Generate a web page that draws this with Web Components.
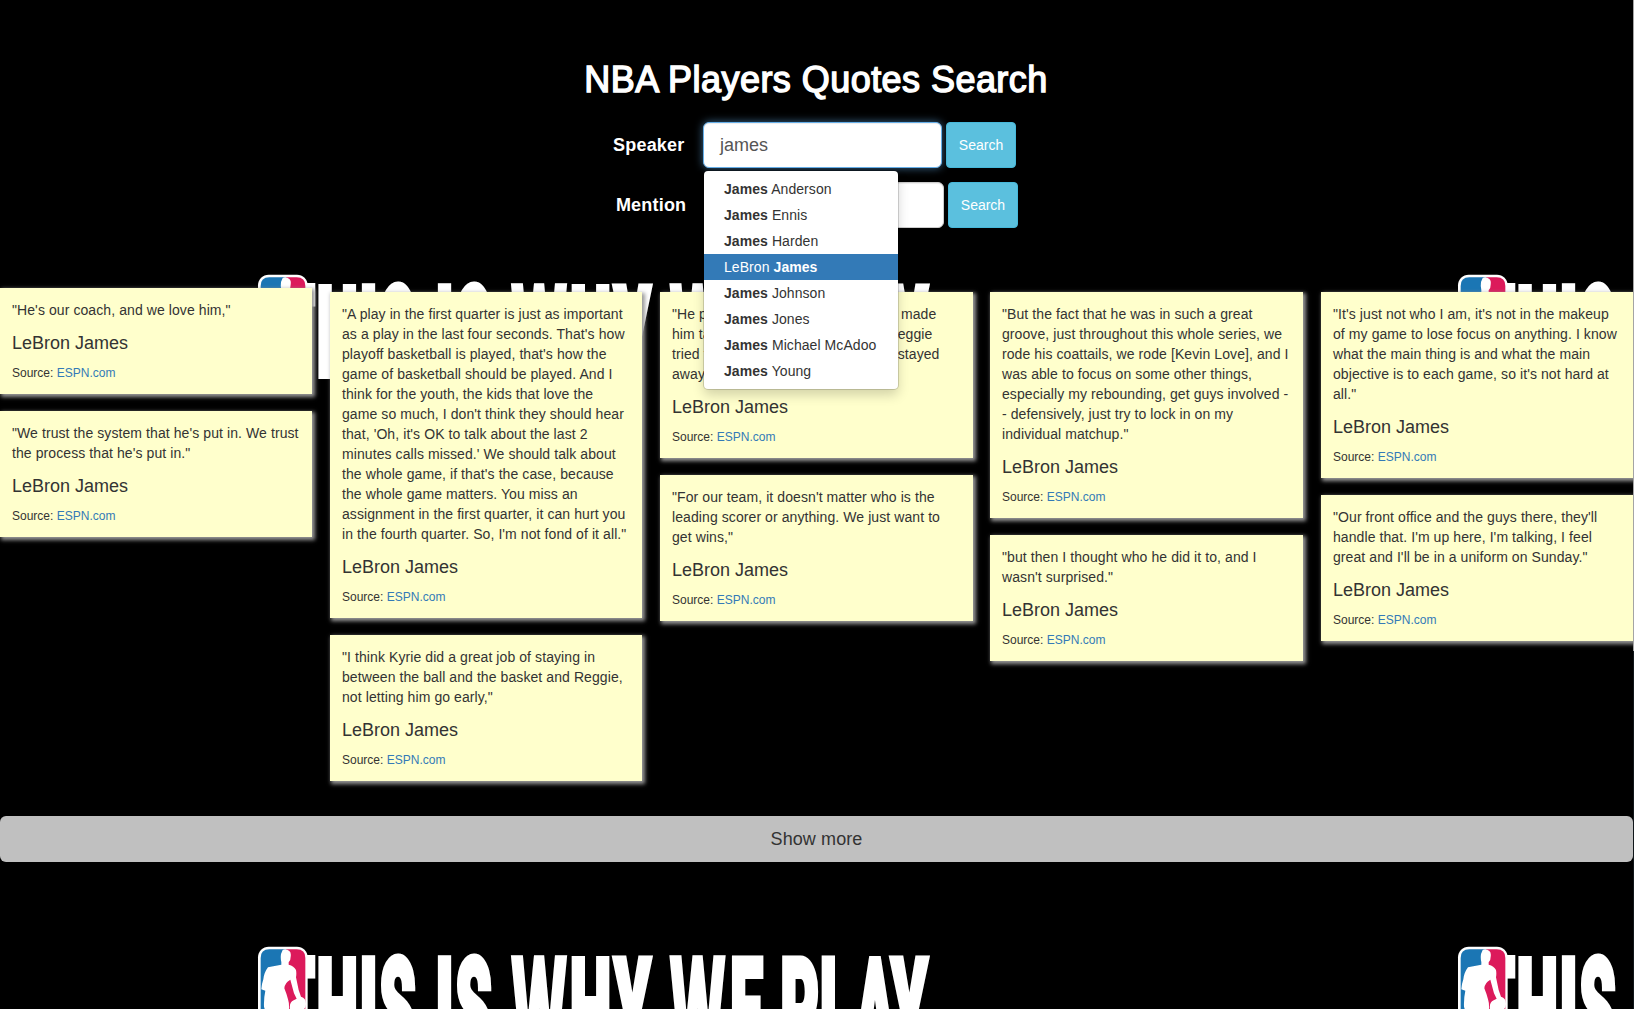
<!DOCTYPE html>
<html lang="en">
<head>
<meta charset="utf-8">
<title>NBA Players Quotes Search</title>
<style>
html,body{margin:0;height:100%;overflow:hidden;background:#000}
body{font:14px/20px "Liberation Sans",Arial,sans-serif;color:#333}
</style>
</head>
<body>
<quotes-app></quotes-app>
<script>
class Base extends HTMLElement{
  constructor(){super();this.attachShadow({mode:'open'})}
  connectedCallback(){this.shadowRoot.innerHTML=this.render()}
}

customElements.define('nba-banner',class extends Base{
  render(){return `<style>
    :host{display:block;width:1200px;height:672px}
    svg{display:block}
    text{font:700 140px Roboto,"Liberation Sans",sans-serif;font-stretch:75%;fill:#fff;stroke:#fff;stroke-width:5.6px;stroke-linejoin:miter;vector-effect:non-scaling-stroke;text-anchor:middle}
    .w{font-family:"Open Sans",sans-serif}
  </style>
  <svg width="1200" height="672" viewBox="0 0 1200 672">
    <clipPath id="line"><rect x="0" y="260" width="1200" height="119"/></clipPath>
    <g clip-path="url(#line)"><g transform="scale(.49 1)">
      <text y="386.5" xml:space="preserve" x="${this.centres().join(' ')}">${this.hasAttribute('short')?'THIS':'THIS IS <tspan class="w">W</tspan>HY <tspan class="w">W</tspan>E PLAY'}</text>
    </g></g>
    <g transform="translate(250 268) scale(.33333)">
      <rect x="24" y="20" width="149" height="335" rx="32" fill="#fff"/>
      <path d="M110 28V348H56Q32 348 32 324V54Q32 28 58 28Z" fill="#1b76b4"/>
      <path d="M108 28H140Q166 28 166 54V324Q166 348 140 348H108Z" fill="#dc1a5b"/>
      <path fill="#fff" d="M98 30Q108 25 118 33Q124 38 122 50Q122 62 116 67L116 74Q132 78 138 90Q140 100 138 112L146 150L153 170Q168 174 168 192Q168 212 146 212Q132 210 118 216L122 260L130 340H50L56 260Q50 225 42 200Q41 175 46 152L34 148Q35 132 40 118Q42 98 54 82L94 74V66Q91 55 93 42Z"/>
      <path fill="#dc1a5b" d="M121 119Q104 128 103 145Q110 162 114 178Q118 190 117 208L120 206Q117 188 131 181L140 176L132 160Z"/>
    </g>
  </svg>`}
  centres(){return [296.7,337.4,368.5,398,421,444.5,474,495,539,590.5,632.5,660,697.5,746.5,770,799.5,836,875,909.5].map(v=>(v/.49).toFixed(1))}
});

customElements.define('banner-backdrop',class extends Base{
  render(){return `<style>
    :host{position:absolute;inset:0;overflow:hidden;display:grid;grid-template-columns:1200px 1200px;grid-template-rows:672px 672px}
  </style><nba-banner></nba-banner><nba-banner short></nba-banner><nba-banner></nba-banner><nba-banner short></nba-banner>`}
});

customElements.define('search-row',class extends Base{
  render(){return `<style>
    :host{display:flex;align-items:center;height:46px;position:relative}
    label{width:var(--label,684.5px);margin-right:var(--gap,18.5px);text-align:right;font-weight:bold;font-size:18px;color:#fff;letter-spacing:.2px}
    .field{box-sizing:border-box;width:239px;height:46px;background:#fff;border:1px solid #ccc;border-radius:6px;padding:0 16px;font-size:18px;line-height:44px;color:#555;box-shadow:inset 0 1px 1px rgba(0,0,0,.075)}
    :host([focused]) .field{border-color:#66afe9;box-shadow:inset 0 1px 1px rgba(0,0,0,.075),0 0 8px rgba(102,175,233,.6)}
    button{box-sizing:border-box;width:70px;height:46px;margin-left:4px;padding:0;font:14px "Liberation Sans",Arial,sans-serif;color:#fff;background:#5bc0de;border:1px solid #46b8da;border-radius:4px}
    ::slotted(type-ahead){position:absolute;left:704px;top:49px;z-index:5}
  </style><label>${this.getAttribute('label')}</label><div class="field">${this.getAttribute('value')||''}</div><button>Search</button><slot></slot>`}
});

customElements.define('type-ahead',class extends Base{
  render(){
    const names=['*James* Anderson','*James* Ennis','*James* Harden','LeBron *James*','*James* Johnson','*James* Jones','*James* Michael McAdoo','*James* Young'];
    return `<style>
    :host{display:block;box-sizing:border-box;width:194px;padding:5px 0;background:#fff;border-radius:4px;box-shadow:0 0 0 1px rgba(0,0,0,.15),0 6px 12px rgba(0,0,0,.175);color:#333}
    div{height:26px;line-height:26px;padding:0 20px;font-size:14px;white-space:nowrap;letter-spacing:.07px}
    div.on{background:#337ab7;color:#fff}
  </style>${names.map((n,i)=>`<div class="${i==3?'on':''}">${n.replace(/\*(.+?)\*/,'<b>$1</b>')}</div>`).join('')}`}
});

customElements.define('quote-card',class extends Base{
  render(){return `<style>
    :host{display:block;box-sizing:border-box;padding:12px 12px 11px;background:#ffc;box-shadow:2px 2px 4px 1px #999;color:#333}
    p{margin:0 0 13px;line-height:20px;white-space:nowrap;letter-spacing:.085px}
    h4{margin:0 0 10px;font-size:18px;line-height:20px;font-weight:500}
    small{display:block;font-size:12px;line-height:20px}
    a{color:#337ab7;text-decoration:none}
  </style><p><slot></slot></p><h4>LeBron James</h4><small>Source: <a>ESPN.com</a></small>`}
});

customElements.define('quote-column',class extends Base{
  render(){return `<style>
    :host{display:flex;flex-direction:column;gap:17px}
  </style><slot></slot>`}
});

customElements.define('quotes-app',class extends Base{
  render(){
    const cols=[
      ["\"He's our coach, and we love him,\"","\"We trust the system that he's put in. We trust|the process that he's put in.\""],
      ["\"A play in the first quarter is just as important|as a play in the last four seconds. That's how|playoff basketball is played, that's how the|game of basketball should be played. And I|think for the youth, the kids that love the|game so much, I don't think they should hear|that, 'Oh, it's OK to talk about the last 2|minutes calls missed.' We should talk about|the whole game, if that's the case, because|the whole game matters. You miss an|assignment in the first quarter, it can hurt you|in the fourth quarter. So, I'm not fond of it all.\"","\"I think Kyrie did a great job of staying in|between the ball and the basket and Reggie,|not letting him go early,\""],
      ["\"He plays great defense on him and made|him take tough shots all night and Reggie|tried to be aggressive, but our guys stayed|away from the fouls.\"","\"For our team, it doesn't matter who is the|leading scorer or anything. We just want to|get wins,\""],
      ["\"But the fact that he was in such a great|groove, just throughout this whole series, we|rode his coattails, we rode [Kevin Love], and I|was able to focus on some other things,|especially my rebounding, get guys involved -|- defensively, just try to lock in on my|individual matchup.\"","\"but then I thought who he did it to, and I|wasn't surprised.\""],
      ["\"It's just not who I am, it's not in the makeup|of my game to lose focus on anything. I know|what the main thing is and what the main|objective is to each game, so it's not hard at|all.\"","\"Our front office and the guys there, they'll|handle that. I'm up here, I'm talking, I feel|great and I'll be in a uniform on Sunday.\""]
    ];
    return `<style>
    :host{display:block;position:relative;height:1009px;overflow:hidden;background:#000}
    .page{position:relative;width:1633px;height:1009px;overflow:hidden}
    h1{margin:0 0 0 -1px;padding-top:60px;height:62px;font-size:36px;line-height:40px;font-weight:500;color:#fff;text-align:center;letter-spacing:.45px;-webkit-text-stroke:1.4px #fff}
    search-row{margin-bottom:14px}
    .first{z-index:2}
    .board{display:grid;grid-template-columns:312px 312px 313px 313px 312px;column-gap:18px;height:574px;padding-top:50px;box-sizing:border-box;align-items:start}
    .board>:first-child{margin-top:-4px}
    .board>:nth-child(4),.board>:nth-child(5){margin-left:-1px}
    .board>:nth-child(4){margin-right:1px}
    .more{display:block;width:1633px;height:46px;padding:0;border:0;border-radius:6px;background:#c0c0c0;color:#333;font:18px "Liberation Sans",Arial,sans-serif;letter-spacing:.1px}
    .edge{position:absolute;right:0;top:0;width:1px;height:1009px;background:linear-gradient(#a4a4a4 651px,#10161a 651px)}
  </style>
  <banner-backdrop></banner-backdrop>
  <div class="page">
    <h1>NBA Players Quotes Search</h1>
    <search-row class="first" label="Speaker" value="james" focused><type-ahead></type-ahead></search-row>
    <search-row label="Mention" style="--label:686.3px;--gap:18.7px"></search-row>
    <div class="board">${cols.map(c=>`<quote-column>${c.map(q=>`<quote-card>${q.replace(/\|/g,'<br>')}</quote-card>`).join('')}</quote-column>`).join('')}</div>
    <button class="more">Show more</button>
  </div>
  <div class="edge"></div>`}
});
</script>
</body>
</html>
